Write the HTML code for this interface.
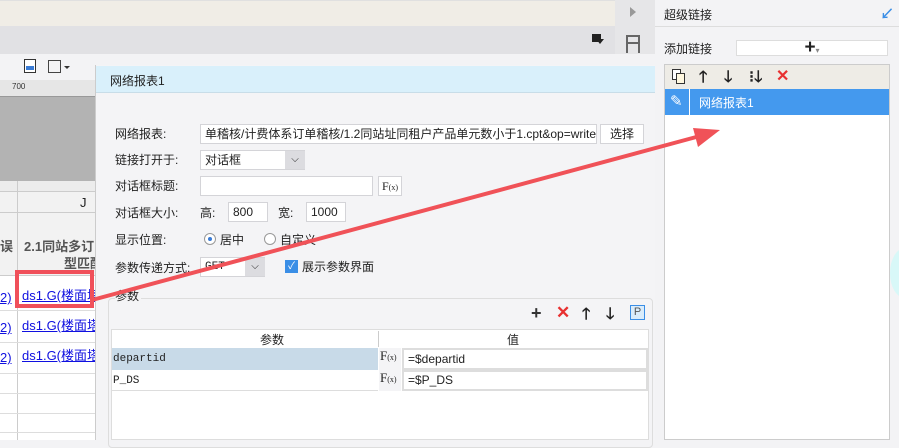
<!DOCTYPE html>
<html><head><meta charset="utf-8"><style>
*{margin:0;padding:0;box-sizing:border-box}
body{width:899px;height:440px;overflow:hidden;position:relative;background:#f3f3f5;font-family:"Liberation Sans","Noto Sans CJK SC",sans-serif;font-size:12px;color:#222}
.a{position:absolute}
.in{position:absolute;background:#fff;border:1px solid #d4d4d8;font-size:12px;padding-left:4px;line-height:18px}
.lbl{position:absolute;left:115px;font-size:12px}
.lnk{position:absolute;color:#1010e0;font-size:13px;text-decoration:underline;white-space:nowrap;overflow:hidden}
</style></head><body>
<div class="a" style="left:0;top:0;width:655px;height:26px;background:#f0ede6;border-top:1px solid #e0e0e0"></div>
<div class="a" style="left:0;top:26px;width:655px;height:28px;background:#e1e1e4"></div>
<div class="a" style="left:615px;top:0;width:40px;height:54px;background:#e6e6e8"></div>
<div class="a" style="left:630px;top:7px;width:0;height:0;border-left:6px solid #999;border-top:5px solid transparent;border-bottom:5px solid transparent"></div>
<div class="a" style="left:592px;top:34px;width:9px;height:8px;background:#222"></div>
<div class="a" style="left:596px;top:39px;width:0;height:0;border-top:5px solid #222;border-left:4px solid transparent;border-right:4px solid transparent"></div>
<div class="a" style="left:626px;top:35px;width:14px;height:18px;border:2px solid #666;border-bottom:none"></div>
<div class="a" style="left:626px;top:42px;width:14px;height:2px;background:#666"></div>
<div class="a" style="left:0;top:54px;width:615px;height:26px;background:#f3f3f5"></div>
<div class="a" style="left:24px;top:59px;width:12px;height:14px;border:1px solid #333;background:#fff"></div>
<div class="a" style="left:26px;top:66px;width:8px;height:4px;background:#3a7bd5"></div>
<div class="a" style="left:48px;top:60px;width:13px;height:13px;border:1px solid #444"></div>
<div class="a" style="left:64px;top:66px;border-top:3px solid #333;border-left:3px solid transparent;border-right:3px solid transparent"></div>
<div class="a" style="left:0;top:80px;width:95px;height:17px;background:#e6e6e6;border-bottom:1px solid #999"></div>
<div class="a" style="left:12px;top:82px;font-size:8px;color:#333">700</div>
<div class="a" style="left:0;top:97px;width:95px;height:84px;background:#b3b3b3"></div>
<div class="a" style="left:0;top:181px;width:95px;height:259px;background:#fff"></div>
<div class="a" style="left:0;top:181px;width:95px;height:10px;background:#ececec"></div>
<div class="a" style="left:0;top:191px;width:95px;height:22px;background:#f2f2f2;border-top:1px solid #ccc;border-bottom:1px solid #ccc"></div>
<div class="a" style="left:80px;top:195px;font-size:13px">J</div>
<div class="a" style="left:0;top:213px;width:95px;height:63px;background:#f2f2f2;border-bottom:1px solid #ccc"></div>
<div class="a" style="left:0;top:236px;font-size:13px;color:#555;font-weight:bold">误</div>
<div class="a" style="left:24px;top:236px;font-size:13px;color:#555;font-weight:bold;white-space:nowrap">2.1同站多订</div>
<div class="a" style="left:64px;top:253px;font-size:13px;color:#555;font-weight:bold;white-space:nowrap">型匹配</div>
<div class="a" style="left:17px;top:181px;width:1px;height:259px;background:#ccc"></div>
<div class="a" style="left:0;top:310px;width:95px;height:1px;background:#ddd"></div>
<div class="a" style="left:0;top:342px;width:95px;height:1px;background:#ddd"></div>
<div class="a" style="left:0;top:373px;width:95px;height:1px;background:#ddd"></div>
<div class="a" style="left:0;top:393px;width:95px;height:1px;background:#ddd"></div>
<div class="a" style="left:0;top:413px;width:95px;height:1px;background:#ddd"></div>
<div class="a" style="left:0;top:432px;width:95px;height:1px;background:#ddd"></div>
<div class="lnk" style="left:0;top:290px;width:14px">2)</div>
<div class="lnk" style="left:0;top:320px;width:14px">2)</div>
<div class="lnk" style="left:0;top:350px;width:14px">2)</div>
<div class="lnk" style="left:22px;top:285px;width:73px">ds1.G(楼面塔</div>
<div class="lnk" style="left:22px;top:315px;width:73px">ds1.G(楼面塔</div>
<div class="lnk" style="left:22px;top:345px;width:73px">ds1.G(楼面塔</div>
<div class="a" style="left:15px;top:270px;width:79px;height:38px;border:4px solid #f0505a"></div>
<div class="a" style="left:95px;top:65px;width:569px;height:375px;background:#f4f4f6;border-left:1px solid #ccc"></div>
<div class="a" style="left:96px;top:66px;width:568px;height:27px;background:#d9f0fb;border-bottom:1px solid #c8dde8"></div>
<div class="a" style="left:110px;top:72px;font-size:12px">网络报表1</div>
<div class="lbl" style="top:125px">网络报表:</div>
<div class="in" style="left:200px;top:124px;width:397px;height:20px;white-space:nowrap;overflow:hidden">单稽核/计费体系订单稽核/1.2同站址同租户产品单元数小于1.cpt&amp;op=write</div>
<div class="in" style="left:600px;top:124px;width:44px;height:20px;text-align:center;padding:0">选择</div>
<div class="lbl" style="top:151px">链接打开于:</div>
<div class="in" style="left:200px;top:150px;width:105px;height:20px">对话框</div>
<div class="a" style="left:285px;top:151px;width:20px;height:18px;background:#dcdce0;text-align:center;font-size:10px;line-height:18px">⌵</div>
<div class="lbl" style="top:177px">对话框标题:</div>
<div class="in" style="left:200px;top:176px;width:173px;height:20px"></div>
<div class="in" style="left:378px;top:176px;width:24px;height:20px;padding:0;text-align:center;font-family:'Liberation Serif',serif;font-size:12px">F<span style="font-size:8px">(x)</span></div>
<div class="lbl" style="top:204px">对话框大小:</div>
<div class="a" style="left:200px;top:204px">高:</div>
<div class="in" style="left:228px;top:202px;width:40px;height:20px">800</div>
<div class="a" style="left:278px;top:204px">宽:</div>
<div class="in" style="left:306px;top:202px;width:40px;height:20px">1000</div>
<div class="lbl" style="top:231px">显示位置:</div>
<div class="a" style="left:204px;top:233px;width:12px;height:12px;border-radius:50%;border:1px solid #999;background:#fff"></div>
<div class="a" style="left:208px;top:237px;width:4px;height:4px;border-radius:50%;background:#3a7bd5"></div>
<div class="a" style="left:220px;top:231px">居中</div>
<div class="a" style="left:264px;top:233px;width:12px;height:12px;border-radius:50%;border:1px solid #999;background:#fff"></div>
<div class="a" style="left:280px;top:231px">自定义</div>
<div class="lbl" style="top:259px">参数传递方式:</div>
<div class="a" style="left:200px;top:257px;width:65px;height:20px;background:#fff;border:1px solid #d4d4d8"></div>
<div class="a" style="left:205px;top:260px;font-family:'Liberation Mono',monospace;font-size:11px;line-height:14px">GET</div>
<div class="a" style="left:245px;top:258px;width:20px;height:18px;background:#dcdce0;text-align:center;font-size:10px;line-height:18px">⌵</div>
<div class="a" style="left:285px;top:260px;width:13px;height:13px;background:#3a8ee6;color:#fff;font-size:10px;line-height:13px;text-align:center">✓</div>
<div class="a" style="left:302px;top:258px">展示参数界面</div>
<div class="a" style="left:108px;top:298px;width:545px;height:150px;border:1px solid #ddd;border-radius:4px"></div>
<div class="a" style="left:115px;top:287px;background:#f4f4f6;padding-right:2px">参数</div>
<div class="a" style="left:531px;top:303px;font-size:18px;font-weight:bold;color:#333">+</div>
<div class="a" style="left:556px;top:303px;font-size:17px;font-weight:bold;color:#e83030">✕</div>
<div class="a" style="left:582px;top:303px;font-size:16px;font-weight:bold;color:#222">🡑</div>
<div class="a" style="left:606px;top:303px;font-size:16px;font-weight:bold;color:#222">🡓</div>
<div class="a" style="left:630px;top:305px;width:15px;height:15px;border:1px solid #3a8ee6;background:#d9ecfb;color:#555;font-size:11px;text-align:center;line-height:13px">P</div>
<div class="a" style="left:111px;top:329px;width:538px;height:111px;background:#fff;border:1px solid #ddd"></div>
<div class="a" style="left:260px;top:331px">参数</div>
<div class="a" style="left:507px;top:331px">值</div>
<div class="a" style="left:378px;top:331px;width:1px;height:16px;background:#ccc"></div>
<div class="a" style="left:112px;top:348px;width:266px;height:22px;background:#c8dae8"></div>
<div class="a" style="left:112px;top:371px;width:266px;height:20px;background:#fff;border-bottom:1px solid #ddd"></div>
<div class="a" style="left:113px;top:352px;font-family:'Liberation Mono',monospace;font-size:11px;line-height:14px">departid</div>
<div class="a" style="left:113px;top:374px;font-family:'Liberation Mono',monospace;font-size:11px;line-height:14px">P_DS</div>
<div class="a" style="left:379px;top:348px;width:22px;height:43px;background:#f4f4f6"></div>
<div class="a" style="left:380px;top:348px;font-family:'Liberation Serif',serif;font-size:13px">F<span style="font-size:8px">(x)</span></div>
<div class="a" style="left:380px;top:370px;font-family:'Liberation Serif',serif;font-size:13px">F<span style="font-size:8px">(x)</span></div>
<div class="in" style="left:402px;top:348px;width:246px;height:22px;border:2px solid #ddd;line-height:18px">=$departid</div>
<div class="in" style="left:402px;top:370px;width:246px;height:21px;border:2px solid #ddd;line-height:17px">=$P_DS</div>
<div class="a" style="left:655px;top:0;width:244px;height:440px;background:#f3f3f5"></div>
<div class="a" style="left:655px;top:0;width:244px;height:27px;border-bottom:1px solid #ddd"></div>
<div class="a" style="left:664px;top:6px;font-size:12px">超级链接</div>
<div class="a" style="left:880px;top:4px;color:#3a8ee6;font-size:14px;font-weight:bold">↙</div>
<div class="a" style="left:664px;top:40px">添加链接</div>
<div class="a" style="left:736px;top:40px;width:152px;height:16px;background:#fff;border:1px solid #ddd;text-align:center;font-size:19px;line-height:14px;font-weight:bold">+<span style="font-size:8px;color:#888;font-weight:normal">▾</span></div>
<div class="a" style="left:664px;top:64px;width:226px;height:376px;background:#fff;border:1px solid #ccc"></div>
<div class="a" style="left:665px;top:65px;width:224px;height:24px;background:#eeece6"></div>
<div class="a" style="left:672px;top:69px;width:9px;height:11px;border:1px solid #333;background:#fff"></div>
<div class="a" style="left:676px;top:73px;width:9px;height:11px;border:1px solid #333;background:#fff8e0"></div>
<div class="a" style="left:699px;top:66px;font-size:16px;font-weight:bold">🡑</div>
<div class="a" style="left:724px;top:66px;font-size:16px;font-weight:bold">🡓</div>
<div class="a" style="left:749px;top:66px;font-size:16px;font-weight:bold">⁝🡓</div>
<div class="a" style="left:776px;top:66px;font-size:16px;font-weight:bold;color:#e83030">✕</div>
<div class="a" style="left:665px;top:89px;width:224px;height:26px;background:#4499ee"></div>
<div class="a" style="left:689px;top:89px;width:1px;height:26px;background:#fff"></div>
<div class="a" style="left:670px;top:92px;color:#fff;font-size:15px">✎</div>
<div class="a" style="left:699px;top:94px;color:#fff">网络报表1</div>
<div class="a" style="left:890px;top:248px;width:30px;height:50px;border-radius:50%;background:#d8f8f8"></div>
<svg class="a" style="left:0;top:0" width="899" height="440"><line x1="92" y1="300" x2="700" y2="136" stroke="#f05258" stroke-width="4"/><polygon points="720,130 693,128 698,147" fill="#f05258"/></svg>
</body></html>
